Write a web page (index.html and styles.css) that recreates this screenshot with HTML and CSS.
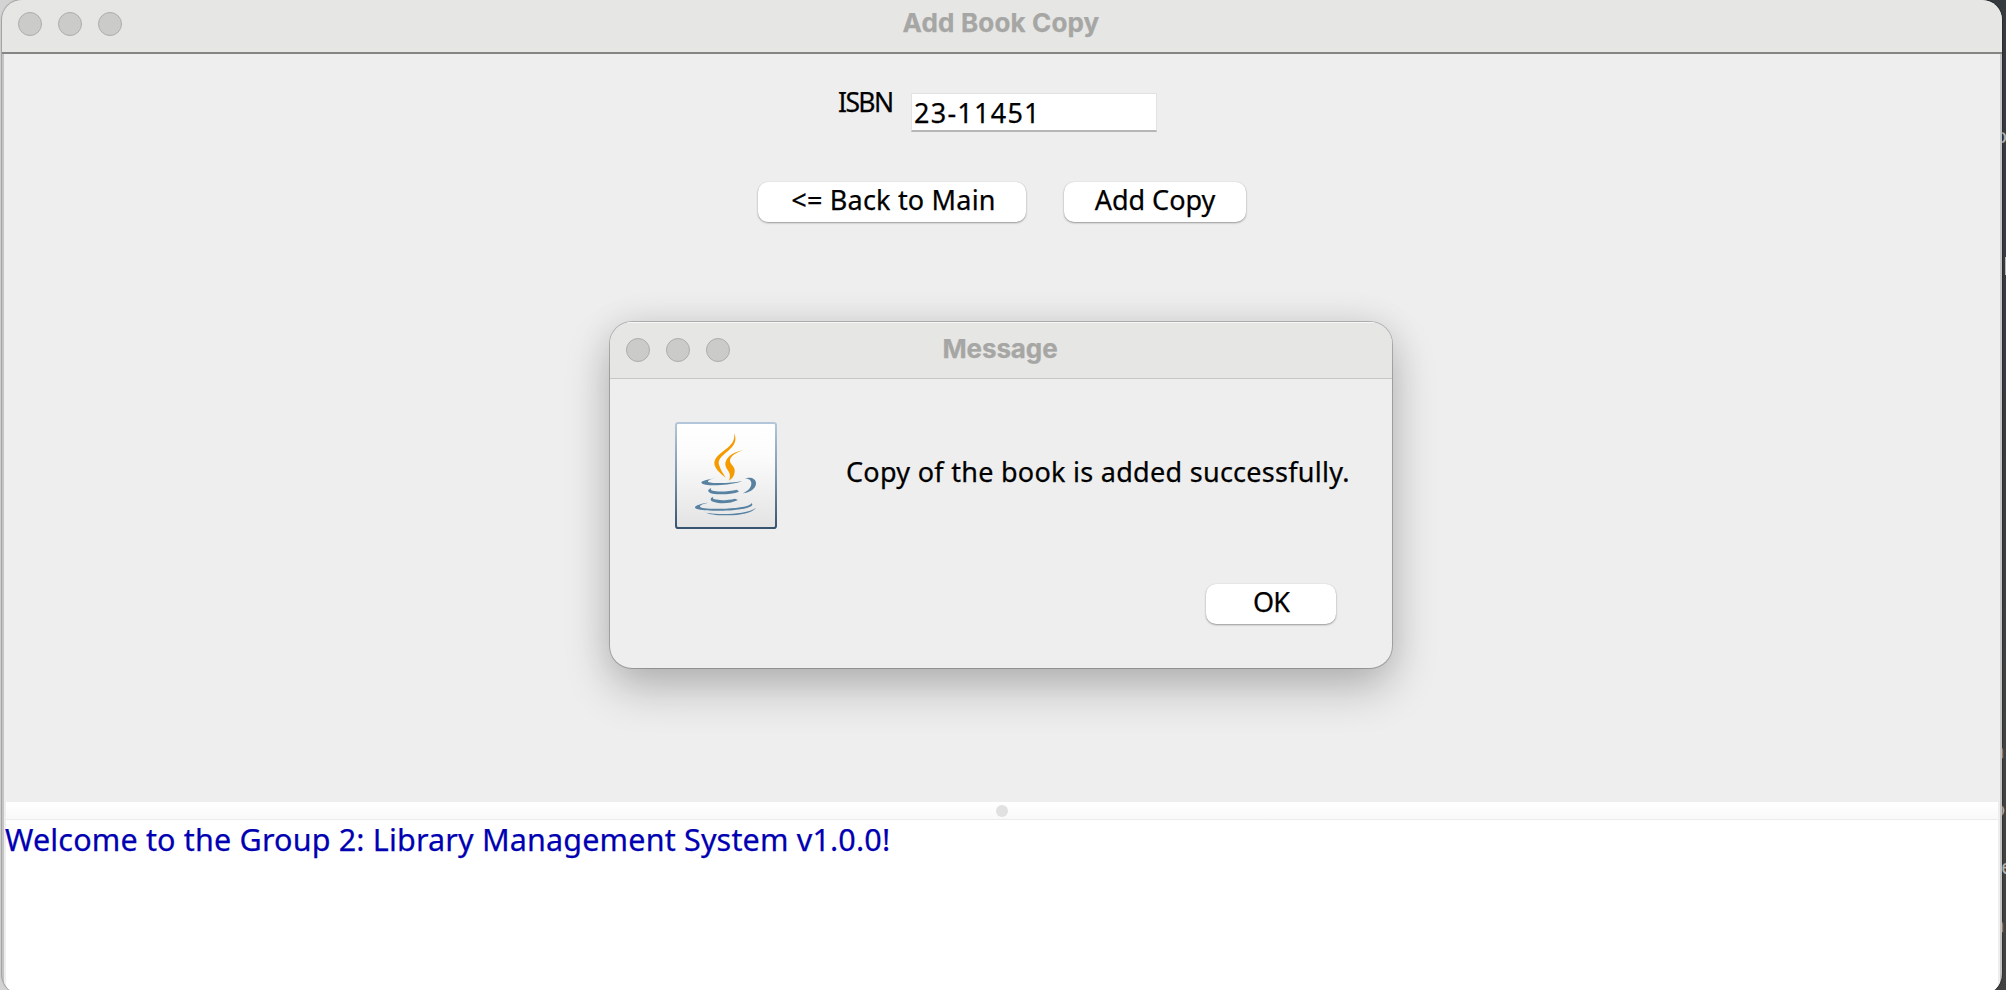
FILE: index.html
```html
<!DOCTYPE html>
<html lang="en">
<head>
<meta charset="utf-8">
<title>Add Book Copy</title>
<link rel="stylesheet" href="styles.css">
</head>
<body>
<div class="desktop">
  <div class="behind" aria-hidden="true">
    <span class="peek peek-o1">o</span>
    <span class="peek-bar"></span>
    <span class="peek peek-n1">n</span>
    <span class="peek peek-o2">o</span>
    <span class="peek peek-e">e</span>
    <span class="peek peek-n2">n</span>
  </div>

  <main class="window">
    <header class="titlebar">
      <div class="lights"><i></i><i></i><i></i></div>
      <h1 class="title">Add Book Copy</h1>
    </header>
    <div class="content">
      <section class="form">
        <div class="field-row">
          <label class="label" for="isbn">ISBN</label>
          <input class="field" id="isbn" type="text" value="23-11451">
        </div>
        <div class="button-row">
          <button class="button back">&lt;= Back to Main</button>
          <button class="button add">Add Copy</button>
        </div>
      </section>
      <div class="divider"><span class="grip"></span></div>
      <section class="log">Welcome to the Group 2: Library Management System v1.0.0!</section>
    </div>
  </main>

  <div class="dialog" role="dialog">
    <header class="titlebar dialog-bar">
      <div class="lights"><i></i><i></i><i></i></div>
      <h2 class="title dialog-title">Message</h2>
    </header>
    <div class="dialog-body">
      <svg class="java" viewBox="45 37 306 321">
        <defs>
          <linearGradient id="paper" x1="0" y1="0" x2="0" y2="1"><stop offset="0" stop-color="#fff"/><stop offset=".3" stop-color="#fcfcfc"/><stop offset="1" stop-color="#e3e3e3"/></linearGradient>
          <linearGradient id="frame" x1="0" y1="0" x2="0" y2="1"><stop offset="0" stop-color="#b4c6d9"/><stop offset=".5" stop-color="#7d96ad"/><stop offset="1" stop-color="#36536f"/></linearGradient>
        </defs>
        <rect x="48" y="40" width="300" height="315" rx="7" fill="url(#paper)" stroke="url(#frame)" stroke-width="6"/>
        <g fill="#f59b00">
          <path d="M223 71C232 94 222 109 205 123C184 140 171 151 178 168C182 180 189 191 197 204C178 189 162 173 163 159C164 142 184 130 202 115C219 101 224 91 223 71Z"/>
          <path d="M250 121C227 129 209 141 210 153C211 166 226 169 224 186C223 199 216 207 207 213C211 202 211 193 205 184C198 174 193 165 198 154C204 138 225 126 250 121Z"/>
        </g>
        <g fill="#5882a2">
          <path d="M168 205C148 208 123 214 124 219C127 226 155 228 182 226C209 225 233 220 247 214C222 219 192 221 167 220C149 219 140 217 145 213C149 209 159 207 168 205Z"/>
          <path d="M255 206C269 201 289 205 288 222C287 239 266 249 248 251C264 244 275 233 274 220C273 210 266 208 255 206Z"/>
          <path d="M154 235C140 240 142 249 158 252C181 256 216 254 237 246L231 240C207 246 172 247 158 243C152 241 151 239 154 235Z"/>
          <path d="M160 261C149 265 149 273 162 277C184 285 216 280 234 271L225 267C204 272 178 273 164 269C158 267 157 264 160 261Z"/>
          <path d="M143 279C124 281 103 288 105 294C110 302 148 304 189 303C230 302 275 296 277 285C277 283 276 281 275 280C273 289 241 295 197 297C152 299 119 296 120 290C121 285 133 282 143 279Z"/>
          <path d="M288 294C278 311 238 318 194 317C167 317 147 313 138 309C169 314 211 314 245 309C266 306 280 301 288 294Z"/>
        </g>
      </svg>
      <p class="message">Copy of the book is added successfully.</p>
      <button class="button ok">OK</button>
    </div>
  </div>
</div>
</body>
</html>
```
FILE: styles.css
```css
* { box-sizing: border-box; }

body { margin: 0; }

.desktop {
  position: relative;
  width: 2006px;
  height: 990px;
  padding: 0 4px 0 2px;
  overflow: hidden;
  background: linear-gradient(90deg, #d3d3d3 0 1000px, #353b3e 1000px);
  font-family: "Noto Sans", sans-serif;
  font-size: 27px;
  -webkit-text-stroke: .25px currentColor;
  color: #000;
}

/* Slivers of the editor window behind */
.behind {
  position: absolute;
  inset: 0 0 0 1000px;
  background: linear-gradient(#353b3e 0 40%, #424242 80%);
}
.peek {
  position: absolute;
  left: 995px;
  font: 20px/20px "Noto Sans", sans-serif;
  color: #b5b7b8;
}
.peek-o1 { top: 126px; }
.peek-n1 { top: 741px; left: 992px; }
.peek-o2 { top: 799px; left: 993px; }
.peek-e { top: 857px; left: 1001px; }
.peek-n2 { top: 915px; left: 992px; }
.peek-bar {
  position: absolute;
  top: 257px;
  left: 1005px;
  width: 1px;
  height: 18px;
  background: #b5b7b8;
}

.window {
  position: relative;
  display: flex;
  flex-direction: column;
  width: 2000px;
  height: 994px;
  overflow: hidden;
  border-radius: 20px;
  background: #c4c4c4;
  box-shadow: 0 0 1px 1px rgba(0, 0, 0, .25);
}

.titlebar {
  display: grid;
  grid-template-columns: 1fr auto 1fr;
  flex: none;
  height: 54px;
  padding: 5px 18px 0 16px;
  border-bottom: 2px solid #858583;
  background: #e6e6e4;
}
.lights {
  display: flex;
  gap: 16px;
  padding-top: 7px;
}
.lights i {
  width: 24px;
  height: 24px;
  border: 1px solid #adadab;
  border-radius: 50%;
  background: #cbcbc9;
}
.title {
  margin: 0;
  font: bold 26px/36px Inter, sans-serif;
  letter-spacing: .15px;
  color: #a6a6a4;
}

.content {
  display: flex;
  flex: 1;
  flex-direction: column;
  margin: 0 2px;
  background: #eee;
}
.form {
  flex: none;
  height: 748px;
  padding-top: 30px;
}
.field-row {
  display: flex;
  gap: 15px;
  height: 98px;
  padding-left: 834px;
}
.label {
  width: 58px;
  font-size: 26.5px;
  line-height: 36px;
  letter-spacing: -1.6px;
  white-space: nowrap;
}
.field {
  width: 246px;
  height: 39px;
  margin-top: 9px;
  padding: 1px 0 1px 2px;
  border: 1px solid #e2e2e2;
  border-bottom: 2px solid #b6b6b6;
  outline: 0;
  background: #fff;
  font: 27px/35px "Noto Sans", sans-serif;
  letter-spacing: 1.25px;
  color: #000;
}
.button-row {
  display: flex;
  gap: 38px;
  padding-left: 754px;
}
.button {
  height: 40px;
  padding: 0 0 4px;
  border: 0;
  border-radius: 10px;
  background: #fff;
  box-shadow: 0 1px 2px rgba(0, 0, 0, .36), 0 0 1px rgba(0, 0, 0, .15);
  font: 27px/36px "Noto Sans", sans-serif;
  letter-spacing: 0;
  color: #000;
}
.back {
  width: 268px;
  padding-left: 3px;
  letter-spacing: .2px;
}
.add { width: 182px; }

.divider {
  display: flex;
  flex: none;
  align-items: center;
  justify-content: center;
  height: 18px;
  margin: 0 2px;
  border-bottom: 1px solid #ebebeb;
  background: linear-gradient(#fff, #f9f9f9);
}
.grip {
  width: 12px;
  height: 12px;
  border-radius: 50%;
  background: #e1e1e1;
}
.log {
  flex: 1;
  margin: 0 2px;
  background: #fff;
  font-size: 30.5px;
  line-height: 38px;
  letter-spacing: .17px;
  text-indent: -1px;
  color: #0000b2;
}

.dialog {
  position: absolute;
  top: 322px;
  left: 610px;
  width: 782px;
  height: 346px;
  overflow: hidden;
  border-radius: 22px;
  background: #eee;
  box-shadow: 0 0 0 1px rgba(0, 0, 0, .22), 0 20px 46px rgba(0, 0, 0, .24), 0 0 36px rgba(0, 0, 0, .08);
}
.dialog-bar {
  height: 57px;
  padding-top: 9px;
  border-bottom: 1px solid #c6c6c4;
  box-shadow: inset 0 1px #f7f7f6;
}
.dialog-title { letter-spacing: -.1px; }
.dialog-body {
  display: grid;
  grid-template-columns: 102px 503px;
  column-gap: 69px;
  padding: 43px 43px 0 65px;
}
.java {
  display: block;
  width: 102px;
  height: 107px;
}
.message {
  margin: 32px 0 0;
  line-height: 36px;
  letter-spacing: .28px;
  white-space: nowrap;
}
.ok {
  grid-column: 2;
  justify-self: end;
  width: 130px;
  margin: 55px 13px 0 0;
  letter-spacing: -.8px;
}
```
